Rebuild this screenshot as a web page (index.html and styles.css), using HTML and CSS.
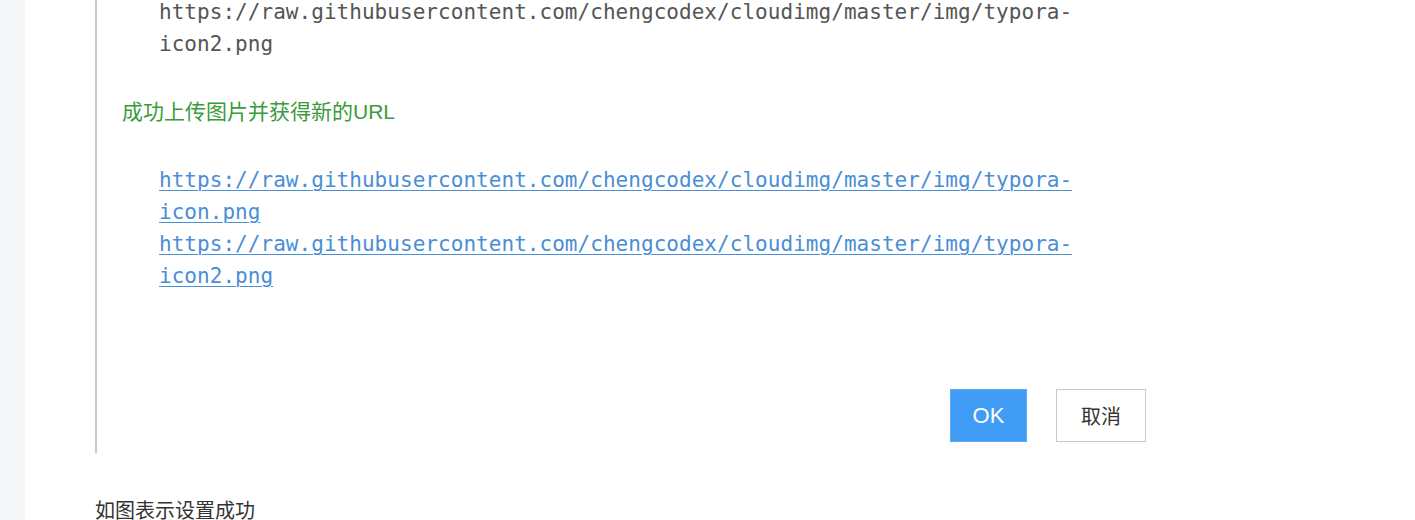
FILE: index.html
```html
<!DOCTYPE html>
<html lang="zh">
<head>
<meta charset="utf-8">
<title>上传图片</title>
<link rel="stylesheet" href="styles.css">
</head>
<body>
<div class="page">
  <aside class="strip"></aside>
  <main class="main">
    <section class="dialog">
      <div class="mono plain">https://raw.githubusercontent.com/chengcodex/cloudimg/master/img/typora-<br>icon2.png</div>
      <p class="success">成功上传图片并获得新的URL</p>
      <div class="mono links">
        <a href="#">https://raw.githubusercontent.com/chengcodex/cloudimg/master/img/typora-<br>icon.png</a><br>
        <a href="#">https://raw.githubusercontent.com/chengcodex/cloudimg/master/img/typora-<br>icon2.png</a>
      </div>
      <div class="actions">
        <button class="btn btn-ok">OK</button>
        <button class="btn btn-cancel">取消</button>
      </div>
    </section>
    <p class="note">如图表示设置成功</p>
  </main>
</div>
</body>
</html>
```

FILE: styles.css
```css
html, body {
  margin: 0;
  padding: 0;
  background: #ffffff;
  height: 520px;
  overflow: hidden;
}
.page {
  display: flex;
  height: 520px;
}
.strip {
  width: 25px;
  flex: none;
  background: #f6f7f9;
}
.main {
  flex: 1;
  padding-left: 70px;
}
.dialog {
  width: 1051px;
  box-sizing: border-box;
  border-left: 2px solid #c9c9c9;
  padding: 0 0 11px 25px;
  margin-top: -4px;
  height: 457px;
  display: flex;
  flex-direction: column;
}
.mono {
  font-family: "DejaVu Sans Mono", "Liberation Mono", monospace;
  font-size: 21px;
  line-height: 32px;
  letter-spacing: 0.04px;
  padding-left: 37px;
}
.plain {
  color: #555555;
}
.success {
  margin: 36px 0 36px 0;
  font-family: "Liberation Sans", "Noto Sans CJK SC", sans-serif;
  font-size: 21px;
  line-height: 32px;
  color: #3a9b3c;
}
.links a {
  color: #4a8ed6;
  text-decoration: underline;
  text-decoration-thickness: 1px;
  text-underline-offset: 3px;
}
.actions {
  margin-top: auto;
  display: flex;
  justify-content: flex-end;
  gap: 29px;
}
.btn {
  height: 53px;
  font-family: "Liberation Sans", "Noto Sans CJK SC", sans-serif;
  font-size: 20px;
  box-sizing: border-box;
  cursor: pointer;
  padding: 0;
}
.btn-ok {
  width: 77px;
  background: #409cf5;
  border: 1px solid #5aaaf7;
  color: #ffffff;
  font-size: 22px;
}
.btn-cancel {
  width: 90px;
  background: #ffffff;
  border: 1px solid #c8c8c8;
  color: #333333;
}
.note {
  margin: 47px 0 0 0;
  font-family: "Noto Sans CJK SC", sans-serif;
  font-size: 20px;
  line-height: 20px;
  color: #333333;
}
```
